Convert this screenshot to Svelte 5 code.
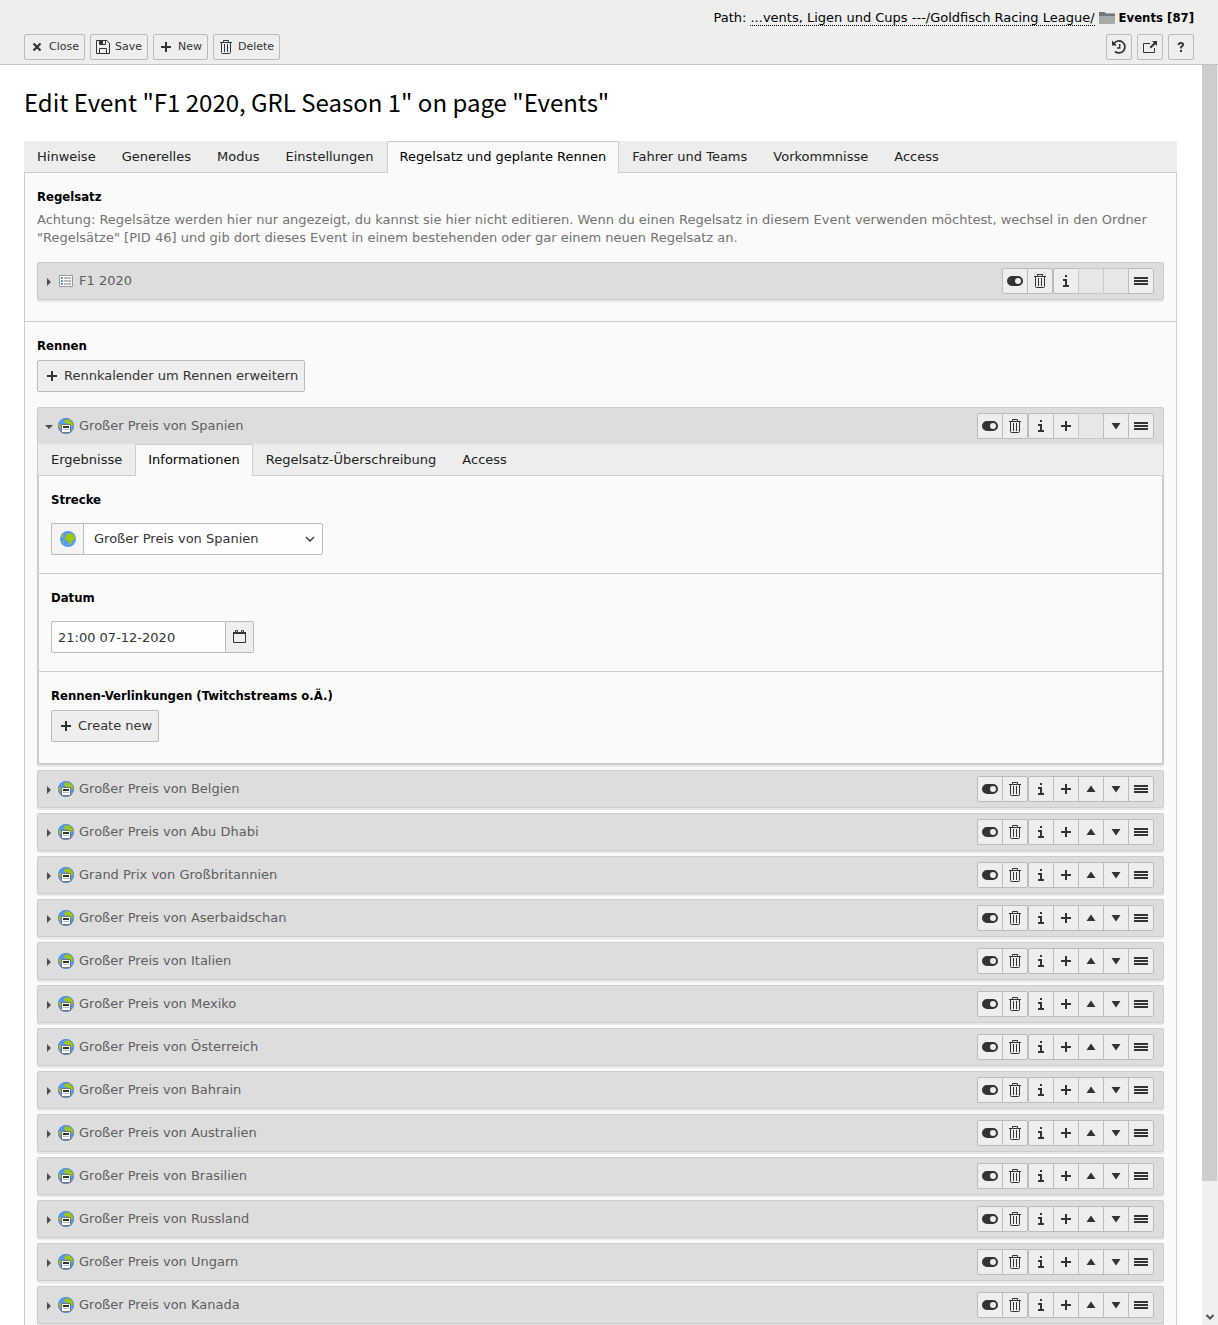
<script lang="ts">
  const tabs = [
    'Hinweise',
    'Generelles',
    'Modus',
    'Einstellungen',
    'Regelsatz und geplante Rennen',
    'Fahrer und Teams',
    'Vorkommnisse',
    'Access'
  ];
  const raceTabs = ['Ergebnisse', 'Informationen', 'Regelsatz-Überschreibung', 'Access'];
  const races = [
    'Großer Preis von Belgien',
    'Großer Preis von Abu Dhabi',
    'Grand Prix von Großbritannien',
    'Großer Preis von Aserbaidschan',
    'Großer Preis von Italien',
    'Großer Preis von Mexiko',
    'Großer Preis von Österreich',
    'Großer Preis von Bahrain',
    'Großer Preis von Australien',
    'Großer Preis von Brasilien',
    'Großer Preis von Russland',
    'Großer Preis von Ungarn',
    'Großer Preis von Kanada'
  ];

  const labels: Record<string, string> = {
    toggle: 'Hide',
    trash: 'Delete',
    info: 'Information',
    plus: 'Create new',
    up: 'Move up',
    down: 'Move down',
    drag: 'Drag to move'
  };

  let activeTab = 'Regelsatz und geplante Rennen';
  let activeRaceTab = 'Informationen';
  let track = 'Großer Preis von Spanien';
  let date = '21:00 07-12-2020';
</script>

{#snippet icon(name: string)}
  <svg class="icon" viewBox="0 0 16 16" width="16" height="16" aria-hidden="true">
    {#if name === 'close'}
      <path d="M4.5 4.5l7 7M11.5 4.5l-7 7" stroke="#333" stroke-width="2.2" />
    {:else if name === 'save'}
      <path
        d="M1.5 1.5h10.3l2.7 2.7v10.3h-13zM4.5 1.5v4h6v-4M4.5 14.5v-5h7v5"
        fill="none"
        stroke="#333"
      />
      <path d="M5 2h3v3H5z" fill="#333" />
    {:else if name === 'plus'}
      <path d="M7 3h2v4h4v2H9v4H7V9H3V7h4z" fill="#333" />
    {:else if name === 'trash'}
      <path
        d="M2 3.5h12M5.5 3V1.5h5V3M3.5 4v9.5q0 1 1 1h7q1 0 1-1V4M6.5 5v8M9.5 5v8"
        fill="none"
        stroke="#333"
      />
    {:else if name === 'toggle'}
      <path
        fill-rule="evenodd"
        d="M5 3h6a5 5 0 0 1 0 10H5A5 5 0 0 1 5 3zm6 2a3 3 0 1 0 0 6 3 3 0 0 0 0-6z"
        fill="#333"
      />
    {:else if name === 'info'}
      <path d="M7 2h2v2H7zM5 6h4v6h2v2H5v-2h2V8H5z" fill="#333" />
    {:else if name === 'up'}
      <path d="M8 4.5l4.5 6.5h-9z" fill="#333" />
    {:else if name === 'down'}
      <path d="M8 11.5L3.5 5h9z" fill="#333" />
    {:else if name === 'drag'}
      <path d="M1 4h14v2H1zM1 7h14v2H1zM1 10h14v2H1z" fill="#333" />
    {:else if name === 'history'}
      <path d="M3 4.5A6 6 0 1 1 4 12.5" fill="none" stroke="#333" stroke-width="1.7" />
      <path d="M1 1.5v5h5z" fill="#333" />
      <path d="M8.7 5v4H6" fill="none" stroke="#333" stroke-width="1.4" />
    {:else if name === 'open'}
      <path d="M8 4.5H1.5v9h11V9" fill="none" stroke="#333" />
      <path d="M10 2h5v5l-1.8-1.8L9 9.4 7.6 8l4.2-4.2z" fill="#333" />
    {:else if name === 'help'}
      <path d="M5.6 6.1V5.3Q6 4 8 4t2.1 1.7Q10 7 8 8v1.6" fill="none" stroke="#333" stroke-width="1.9" />
      <path d="M7 11h2v2H7z" fill="#333" />
    {:else if name === 'folder'}
      <path d="M0 2h6l1 1h9v11H0z" fill="#a9a9a9" />
      <path d="M0 2h5l2 2h9v2H0z" fill="#777" />
    {:else if name === 'calendar'}
      <path d="M1.5 3.5h12v10h-12z" fill="none" stroke="#333" />
      <path d="M1 3h13v2H1z" fill="#333" />
      <path d="M3.5 1.5h2v2h-2zM9.5 1.5h2v2h-2z" fill="#eee" stroke="#333" />
    {:else if name === 'list'}
      <path d="M1.5 2.5h13v11h-13z" fill="#fff" stroke="#999" />
      <path d="M3 4h2v2H3zM3 7h2v2H3zM3 10h2v2H3z" fill="#59f" />
      <path d="M6 4h7v2H6zM6 7h7v2H6zM6 10h7v2H6z" fill="#b9b9b9" />
    {:else if name === 'globe' || name === 'race'}
      <circle cx="8" cy="8" r="8" fill="#59f" />
      {#if name === 'globe'}
        <path
          d="M6.5 3.5L9 2l3.5 1L15 5.500l-.5 3-2 1-.5 2L10 14H9l-.5-4-2.500-.5L5 7.500zM1 5.500l2-2.500 1 1.500L3 6.500zM2 9l2 1.500L4 13z"
          fill="#a4c800"
        />
      {:else}
        <path d="M6 3l3-2 4 1L15 4.500 15.800 8H12L10 5.500 6.500 5zM1 5L3 7 2.500 11 .500 9z" fill="#a4c800" />
        <circle cx="8" cy="8" r="7.500" fill="none" stroke="#5a8fc8" />
        <path d="M3.500 6.500h9v8h-9z" fill="#fff" stroke="#777" />
        <path d="M5 8h6v2H5z" fill="#333" />
        <path d="M5 11.500h6" stroke="#bbb" />
      {/if}
    {/if}
  </svg>
{/snippet}

{#snippet controls(group: string[])}
  <div class="btn-group">
    {#each group as name}
      {#if name}
        <button type="button" class="btn-icon" aria-label={labels[name]}>{@render icon(name)}</button>
      {:else}
        <span class="btn-icon empty"></span>
      {/if}
    {/each}
  </div>
{/snippet}

{#snippet recordHeader(title: string, type: string, open: boolean, actions: string[])}
  <div class="record-header">
    <button type="button" class="record-toggle" aria-expanded={open}>
      <span class="caret" class:open></span>
      {@render icon(type)}
      <span>{title}</span>
    </button>
    <div class="record-actions">
      {@render controls(['toggle', 'trash'])}
      {@render controls(actions)}
    </div>
  </div>
{/snippet}

<div class="module">
  <header class="docheader">
    <div class="path">
      <span>Path:</span>
      <a href="#path">...vents, Ligen und Cups ---/Goldfisch Racing League/</a>
      {@render icon('folder')}
      <strong>Events [87]</strong>
    </div>
    <div class="toolbar">
      <div class="toolbar-side">
        <button type="button" class="btn-small">{@render icon('close')}Close</button>
        <button type="button" class="btn-small">{@render icon('save')}Save</button>
        <button type="button" class="btn-small">{@render icon('plus')}New</button>
        <button type="button" class="btn-small">{@render icon('trash')}Delete</button>
      </div>
      <div class="toolbar-side">
        <button type="button" class="btn-icon" aria-label="History">{@render icon('history')}</button>
        <button type="button" class="btn-icon" aria-label="Open in new window">{@render icon('open')}</button>
        <button type="button" class="btn-icon" aria-label="Help">{@render icon('help')}</button>
      </div>
    </div>
  </header>

  <div class="body">
    <main>
      <h1>Edit Event "F1 2020, GRL Season 1" on page "Events"</h1>

      <div class="tabs" role="tablist">
        {#each tabs as tab}
          <button
            type="button"
            role="tab"
            class:active={tab === activeTab}
            aria-selected={tab === activeTab}
            on:click={() => (activeTab = tab)}>{tab}</button
          >
        {/each}
      </div>

      <div class="panel">
        <section class="ruleset">
          <h2>Regelsatz</h2>
          <p>
            Achtung: Regelsätze werden hier nur angezeigt, du kannst sie hier nicht editieren. Wenn du einen
            Regelsatz in diesem Event verwenden möchtest, wechsel in den Ordner "Regelsätze" [PID 46] und gib
            dort dieses Event in einem bestehenden oder gar einem neuen Regelsatz an.
          </p>
          <div class="record">
            {@render recordHeader('F1 2020', 'list', false, ['info', '', '', 'drag'])}
          </div>
        </section>

        <section class="races">
          <h2>Rennen</h2>
          <button type="button" class="btn">{@render icon('plus')}Rennkalender um Rennen erweitern</button>

          <div class="records">
            <div class="record expanded">
              {@render recordHeader('Großer Preis von Spanien', 'race', true, ['info', 'plus', '', 'down', 'drag'])}
              <div class="tabs inner" role="tablist">
                {#each raceTabs as tab}
                  <button
                    type="button"
                    role="tab"
                    class:active={tab === activeRaceTab}
                    aria-selected={tab === activeRaceTab}
                    on:click={() => (activeRaceTab = tab)}>{tab}</button
                  >
                {/each}
              </div>
              <div class="race-form">
                <div class="field">
                  <label for="track">Strecke</label>
                  <div class="input-group track">
                    <span class="addon">{@render icon('globe')}</span>
                    <div class="select-wrap">
                      <select id="track" bind:value={track}>
                        <option>Großer Preis von Spanien</option>
                        {#each races as race}
                          <option>{race}</option>
                        {/each}
                      </select>
                      <svg class="chevron" viewBox="0 0 10 6" width="10" height="6" aria-hidden="true">
                        <path d="M1 1l4 4 4-4" fill="none" stroke="#333" stroke-width="1.300" />
                      </svg>
                    </div>
                  </div>
                </div>
                <div class="field">
                  <label for="date">Datum</label>
                  <div class="input-group date">
                    <input id="date" type="text" bind:value={date} />
                    <button type="button" class="addon" aria-label="Open calendar">{@render icon('calendar')}</button>
                  </div>
                </div>
                <div class="field links">
                  <h2>Rennen-Verlinkungen (Twitchstreams o.Ä.)</h2>
                  <button type="button" class="btn">{@render icon('plus')}Create new</button>
                </div>
              </div>
            </div>

            {#each races as race}
              <div class="record">
                {@render recordHeader(race, 'race', false, ['info', 'plus', 'up', 'down', 'drag'])}
              </div>
            {/each}
          </div>
        </section>
      </div>
    </main>

    <div class="scrollbar" aria-hidden="true">
      <div class="thumb"></div>
      <div class="track-end">
        <svg viewBox="0 0 16 16" width="16" height="16">
          <path d="M4.500 6l3.500 3.500L11.500 6" fill="none" stroke="#505050" stroke-width="2" />
        </svg>
      </div>
    </div>
  </div>
</div>

<style>
  :global(body) {
    margin: 0;
    background: #fff;
  }
  .module {
    display: flex;
    flex-direction: column;
    height: 100vh;
    overflow: hidden;
    font-family: Verdana, 'DejaVu Sans', sans-serif;
    font-size: 13px;
    line-height: 18px;
    color: #000;
  }
  .module * {
    box-sizing: border-box;
  }
  button,
  input,
  select {
    font: inherit;
    color: #333;
    margin: 0;
  }
  button {
    cursor: pointer;
  }
  .icon {
    display: block;
    flex: none;
  }

  .docheader {
    flex: none;
    padding: 9px 24px 4px;
    background: #eee;
    border-bottom: 1px solid #c3c3c3;
  }
  .path {
    display: flex;
    justify-content: flex-end;
    align-items: center;
    gap: 4px;
    height: 18px;
    margin-bottom: 7px;
  }
  .path a {
    color: inherit;
    text-decoration: none;
    line-height: 14px;
    border-bottom: 1px dotted #000;
  }
  .toolbar,
  .toolbar-side {
    display: flex;
  }
  .toolbar {
    justify-content: space-between;
  }
  .toolbar-side {
    gap: 5px;
  }
  .btn-small,
  .btn-icon,
  .btn {
    display: flex;
    align-items: center;
    justify-content: center;
    background: #eee;
    border: 1px solid #bbb;
    border-radius: 2px;
  }
  .btn-small {
    gap: 4px;
    height: 26px;
    padding: 0 5px 0 4px;
    font-size: 11px;
  }
  .btn-icon {
    width: 26px;
    height: 26px;
    padding: 0;
  }
  .btn {
    gap: 4px;
    height: 32px;
    padding: 0 6px;
  }

  .body {
    display: flex;
    flex: 1;
    min-height: 0;
  }
  main {
    flex: 1;
    min-width: 0;
    padding: 21px 25px 0 24px;
    overflow: hidden;
  }
  h1 {
    margin: 0 0 23px;
    font: 400 24px/32px 'Noto Sans CJK SC', sans-serif;
  }
  h2,
  label,
  strong {
    display: block;
    margin: 0;
    font: 700 13px/18px 'DejaVu Sans Condensed', 'DejaVu Sans', sans-serif;
  }
  p {
    margin: 5px 0 15px;
    color: #737373;
  }

  .tabs {
    display: flex;
    background: #ededed;
    border-bottom: 1px solid #ccc;
    border-radius: 2px 2px 0 0;
  }
  .tabs button {
    height: 32px;
    margin-bottom: -1px;
    padding: 0 12px 2px;
    color: #212121;
    background: none;
    border: 1px solid transparent;
    border-bottom: 0;
    border-radius: 2px 2px 0 0;
  }
  .tabs button.active {
    color: #000;
    background: #fafafa;
    border-color: #ccc;
  }
  .tabs.inner {
    border-radius: 0;
  }
  .panel {
    background: #fafafa;
    border: 1px solid #ccc;
    border-top: 0;
  }
  .ruleset {
    padding: 15px 12px 21px;
    border-bottom: 1px solid #ccc;
  }
  .races {
    padding: 15px 12px;
  }
  .races .btn {
    margin-top: 5px;
  }

  .records {
    display: flex;
    flex-direction: column;
    gap: 5px;
    margin-top: 15px;
  }
  .record {
    background: #ddd;
    border: 1px solid #ccc;
    border-radius: 2px;
    box-shadow: 0 2px 1px rgba(0, 0, 0, 0.08);
  }
  .record-header {
    display: flex;
    justify-content: space-between;
    align-items: center;
    height: 36px;
    padding: 0 9px 0 7px;
  }
  .record-toggle {
    display: flex;
    flex: 1;
    align-items: center;
    gap: 5px;
    padding: 0;
    color: #5e5e5e;
    text-align: left;
    background: none;
    border: 0;
  }
  .caret {
    display: flex;
    justify-content: center;
    width: 8px;
    margin-top: 2px;
  }
  .caret::before {
    content: '';
    border: 4px solid transparent;
    border-left-color: #4c4c4c;
    border-right-width: 0;
  }
  .caret.open::before {
    border-top-color: #4c4c4c;
    border-left-color: transparent;
    border-right-width: 4px;
    border-bottom-width: 0;
  }
  .record-actions,
  .btn-group {
    display: flex;
  }
  .btn-group .btn-icon {
    border-radius: 0;
  }
  .btn-group .btn-icon + .btn-icon {
    margin-left: -1px;
  }
  .btn-group .btn-icon:first-child {
    border-radius: 2px 0 0 2px;
  }
  .btn-group .btn-icon:last-child {
    border-radius: 0 2px 2px 0;
  }
  .btn-icon.empty {
    background: #e7e7e7;
    border-color: #c8c8c8;
  }

  .race-form {
    background: #fafafa;
    border: 1px solid #ccc;
    border-top: 0;
  }
  .field {
    padding: 15px 12px 18px;
  }
  .field + .field {
    border-top: 1px solid #ccc;
  }
  .field.links {
    padding-bottom: 21px;
  }
  .input-group {
    display: flex;
    height: 32px;
    margin-top: 14px;
  }
  .track {
    width: 272px;
  }
  .date {
    width: 203px;
  }
  .addon {
    display: flex;
    align-items: center;
    justify-content: center;
    padding: 0;
    border: 1px solid #bbb;
  }
  .track .addon {
    width: 32px;
    background: #f4f4f4;
    border-right: 0;
    border-radius: 2px 0 0 2px;
  }
  .date .addon {
    width: 28px;
    background: #eee;
    border-left: 0;
    border-radius: 0 2px 2px 0;
  }
  .select-wrap {
    position: relative;
    flex: 1;
  }
  select,
  input {
    height: 32px;
    background: #fefefe;
    border: 1px solid #bbb;
  }
  select {
    width: 100%;
    padding: 0 24px 0 10px;
    border-radius: 0 2px 2px 0;
    appearance: none;
  }
  .chevron {
    position: absolute;
    top: 13px;
    right: 8px;
    pointer-events: none;
  }
  input {
    flex: 1;
    min-width: 0;
    padding: 0 6px;
    border-radius: 2px 0 0 2px;
  }

  .scrollbar {
    display: flex;
    flex: none;
    flex-direction: column;
    width: 16px;
    background: #f0f0f0;
  }
  .thumb {
    flex: 31;
    width: 15px;
    background: #cdcdcd;
  }
  .track-end {
    display: flex;
    flex: 4;
    align-items: flex-end;
  }
</style>
